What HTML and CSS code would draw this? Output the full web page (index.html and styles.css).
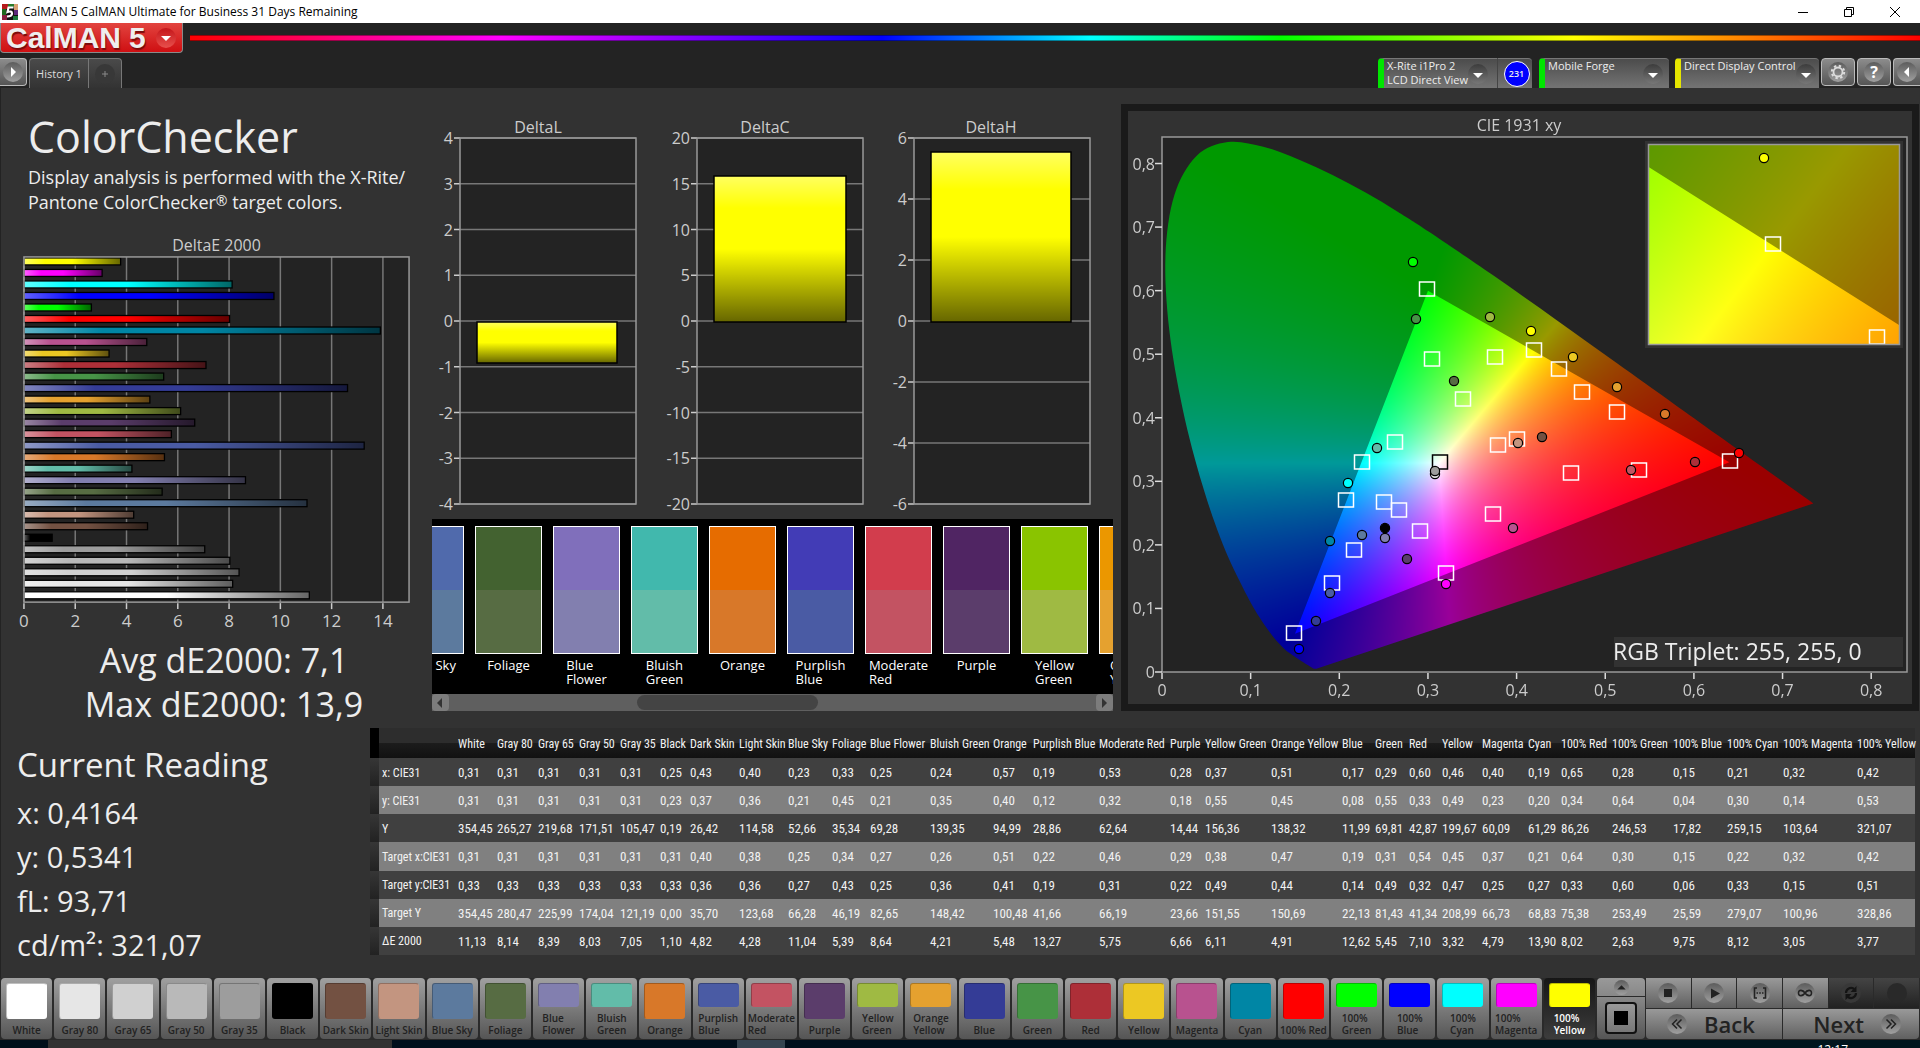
FILE: index.html
```html
<!DOCTYPE html>
<html lang="en">
<head>
<meta charset="utf-8">
<title>CalMAN 5 CalMAN Ultimate for Business 31 Days Remaining</title>
<link rel="stylesheet" href="styles.css">
</head>
<body>
<header class="titlebar">
  <svg class="app-icon" viewBox="0 0 16 16" aria-hidden="true">
    <rect width="16" height="16" fill="#111"/>
    <path d="M0 0h6v5H0z" fill="#b51a1a"/><path d="M6 0h6v3H6z" fill="#2a7a2a"/><path d="M12 0h4v6h-4z" fill="#d8a070"/>
    <path d="M0 5h4v6H0z" fill="#1e6a1e"/><path d="M0 11h5v5H0z" fill="#8a2040"/><path d="M12 6h4v5h-4z" fill="#5b2a7a"/><path d="M11 12h5v4h-5z" fill="#1c7a3c"/>
    <path d="M11.500 3.500H6.500L5.500 8Q10 6.500 10 9.500T5 12.500" fill="none" stroke="#fff" stroke-width="2.200"/>
  </svg>
  <span class="titlebar-text">CalMAN 5 CalMAN Ultimate for Business 31 Days Remaining</span>
  <div class="window-buttons">
    <button aria-label="Minimize"><svg viewBox="0 0 12 12"><path d="M1 6.500h10"/></svg></button>
    <button aria-label="Restore"><svg viewBox="0 0 12 12"><path d="M1.500 3.500h7v7h-7zM3.500 3.500v-2h7v7h-2"/></svg></button>
    <button aria-label="Close"><svg viewBox="0 0 12 12"><path d="M1 1l10 10M11 1L1 11"/></svg></button>
  </div>
</header>

<div class="brandbar">
  <button class="logo"><span class="logo-name">CalMAN</span><span class="logo-name">5</span>
    <span class="logo-menu"><svg viewBox="0 0 20 20"><path d="M5 8h10l-5 5z" fill="#fff"/></svg></span>
  </button>
  <div class="spectrum"></div>
</div>

<nav class="toolbar">
  <button class="square-btn expand" aria-label="Expand"><svg viewBox="0 0 20 20"><circle cx="10" cy="10" r="10" fill="url(#knob)"/><path d="M8 5l5 5-5 5z" fill="#fff"/></svg></button>
  <div class="tabs">
    <button class="tab">History 1</button>
    <button class="tab-add" aria-label="Add tab"><svg viewBox="0 0 20 20"><circle cx="10" cy="10" r="10" fill="#383838"/><path d="M7 10h6M10 7v6" stroke="#888"/></svg></button>
  </div>
  <div class="devices">
    <button class="device meter"><span>X-Rite i1Pro 2<br>LCD Direct View</span><svg viewBox="0 0 20 20"><circle cx="10" cy="10" r="10" fill="url(#well)"/><path d="M5 9h10l-5 5z" fill="#fff"/></svg></button>
    <div class="meter-count"><span>231</span></div>
    <button class="device source"><span>Mobile Forge</span><svg viewBox="0 0 20 20"><circle cx="10" cy="10" r="10" fill="url(#well)"/><path d="M5 9h10l-5 5z" fill="#fff"/></svg></button>
    <button class="device display"><span>Direct Display Control</span><svg viewBox="0 0 20 20"><circle cx="10" cy="10" r="10" fill="url(#well)"/><path d="M5 9h10l-5 5z" fill="#fff"/></svg></button>
    <button class="square-btn" aria-label="Settings"><svg viewBox="0 0 20 20"><circle cx="10" cy="10" r="10" fill="url(#knob)"/><circle cx="10" cy="10" r="4.500" fill="none" stroke="#ddd" stroke-width="1.800"/><circle cx="10" cy="10" r="6.200" fill="none" stroke="#ddd" stroke-width="2" stroke-dasharray="2.400 2.470"/></svg></button>
    <button class="square-btn help" aria-label="Help"><span>?</span></button>
    <button class="square-btn last" aria-label="Collapse"><svg viewBox="0 0 20 20"><circle cx="10" cy="10" r="10" fill="url(#knob)"/><path d="M12 5l-5 5 5 5z" fill="#fff"/></svg></button>
  </div>
</nav>

<main class="workspace">
  <section class="upper">
    <div class="summary">
      <h1>ColorChecker</h1>
      <p class="intro">Display analysis is performed with the X-Rite/<br>Pantone ColorChecker<sup>®</sup> target colors.</p>
      <svg id="delta-e" class="chart" viewBox="0 230 432 409"></svg>
      <p class="stat">Avg dE2000: 7,1</p>
      <p class="stat">Max dE2000: 13,9</p>
    </div>

    <div class="middle">
      <svg id="deltas" class="chart" viewBox="432 110 681 409"></svg>
      <div class="swatch-view">
        <div class="swatch-strip" id="swatches"></div>
        <div class="scrollbar">
          <button aria-label="Scroll left"><svg viewBox="0 0 16 16"><path d="M10 3v10L5 8z"/></svg></button>
          <div class="track"><div class="thumb"></div></div>
          <button aria-label="Scroll right"><svg viewBox="0 0 16 16"><path d="M6 3v10l5-5z"/></svg></button>
        </div>
      </div>
    </div>

    <div class="cie-col">
      <div class="cie">
        <canvas id="cie-colors" width="784" height="593"></canvas>
        <svg id="cie-chart" class="chart" viewBox="1128 111 784 593"></svg>
      </div>
    </div>
  </section>

  <section class="lower">
    <div class="reading">
      <h2>Current Reading</h2>
      <p>x: 0,4164</p>
      <p>y: 0,5341</p>
      <p>fL: 93,71</p>
      <p>cd/m²: 321,07</p>
    </div>
    <table class="data" id="data"></table>
  </section>
</main>

<footer class="controls">
  <div class="patches" id="patches"></div>
  <div class="layout-box">
    <button class="up" aria-label="Show more"><svg viewBox="0 0 16 16"><circle cx="8" cy="8" r="8" fill="url(#knob)"/><path d="M3.500 10h9L8 5.500z" fill="#222"/></svg></button>
    <button class="pattern" aria-label="Pattern"><span></span></button>
  </div>
  <div class="transport">
    <button aria-label="Stop"><svg viewBox="0 0 20 20"><circle cx="10" cy="10" r="10" fill="url(#knob)"/><path d="M6 6h8v8H6z" fill="#222"/></svg></button>
    <button aria-label="Play"><svg viewBox="0 0 20 20"><circle cx="10" cy="10" r="10" fill="url(#knob)"/><path d="M7 5.500l9 5-9 5z" fill="#222"/></svg></button>
    <button aria-label="Read series"><svg viewBox="0 0 20 20"><circle cx="10" cy="10" r="10" fill="url(#knob)"/><path d="M7 5H4.500v10H7M13 5h2.500v10H13M6.500 10h1.500M9.200 10h1.600M12 10h1.500" fill="none" stroke="#222" stroke-width="1.600"/></svg></button>
    <button aria-label="Continuous"><svg viewBox="0 0 20 20"><circle cx="10" cy="10" r="10" fill="url(#knob)"/><path d="M10 10C8 7 3.500 6 3.500 10S8 13 10 10s6.500-4 6.500 0-4.500 3-6.500 0z" fill="none" stroke="#222" stroke-width="1.600"/></svg></button>
    <button class="off" aria-label="Refresh"><svg viewBox="0 0 20 20"><circle cx="10" cy="10" r="10" fill="#383838"/><path d="M5 10a5 5 0 0 1 8-4M15 10a5 5 0 0 1-8 4" fill="none" stroke="#141414" stroke-width="2.200"/><path d="M15.500 3v6h-6zM4.500 17v-6h6z" fill="#141414"/></svg></button>
    <button class="off" aria-label="Record"><svg viewBox="0 0 20 20"><circle cx="10" cy="10" r="10" fill="#292929"/></svg></button>
    <button class="wide"><svg viewBox="0 0 20 20"><circle cx="10" cy="10" r="10" fill="url(#knob)"/><path d="M10 5.500L5.500 10l4.500 4.500M14.500 5.500L10 10l4.500 4.500" fill="none" stroke="#222" stroke-width="1.500"/></svg>Back</button>
    <button class="wide next">Next<svg viewBox="0 0 20 20"><circle cx="10" cy="10" r="10" fill="url(#knob)"/><path d="M5.500 5.500L10 10l-4.500 4.500M10 5.500l4.500 4.500-4.500 4.500" fill="none" stroke="#222" stroke-width="1.500"/></svg></button>
  </div>
</footer>
<div class="taskbar"><span>12:17</span></div>

<svg class="defs" width="0" height="0" aria-hidden="true">
  <defs>
    <linearGradient id="knob" x1="0" y1="0" x2="0" y2="1"><stop offset="0" stop-color="#5c5c5c"/><stop offset="1" stop-color="#a0a0a0"/></linearGradient>
    <linearGradient id="well" x1="0" y1="0" x2="0" y2="1"><stop offset="0" stop-color="#3c3c3c"/><stop offset="1" stop-color="#777"/></linearGradient>
    <linearGradient id="shade-x" x1="0" y1="0" x2="1" y2="0"><stop offset="0" stop-color="#fff" stop-opacity=".38"/><stop offset=".22" stop-color="#fff" stop-opacity="0"/><stop offset=".5" stop-color="#000" stop-opacity="0"/><stop offset="1" stop-color="#000" stop-opacity=".6"/></linearGradient>
    <linearGradient id="shade-y" x1="0" y1="0" x2="0" y2="1"><stop offset="0" stop-color="#fff" stop-opacity=".38"/><stop offset=".22" stop-color="#fff" stop-opacity="0"/><stop offset=".5" stop-color="#000" stop-opacity="0"/><stop offset="1" stop-color="#000" stop-opacity=".6"/></linearGradient>
  </defs>
</svg>
<script src="app.js"></script>
</body>
</html>
```
FILE: styles.css
```css
* { box-sizing: border-box; }
body {
  margin: 0;
  min-height: 100vh;
  display: flex;
  flex-direction: column;
  overflow: hidden;
  background: #232323;
  color: #ededed;
  font-family: "Open Sans", "Noto Sans", sans-serif;
  font-size: 12px;
}
h1, h2, p { margin: 0; font-weight: 400; }
button { border: 0; padding: 0; margin: 0; background: none; color: inherit; font: inherit; }
svg { display: block; }
.defs { position: absolute; }

/* window title */
.titlebar { display: flex; align-items: center; height: 23px; padding: 0 2px; background: #fff; color: #000; }
.app-icon { width: 16px; height: 16px; }
.titlebar-text { flex: 1; padding-left: 5px; line-height: 23px; }
.window-buttons { display: flex; }
.window-buttons button { width: 46px; height: 20px; display: grid; place-items: center; }
.window-buttons svg { width: 12px; height: 12px; fill: none; stroke: #000; }

/* logo and spectrum line */
.brandbar { display: flex; height: 30px; }
.logo {
  display: flex; align-items: center; width: 183px; height: 30px; padding: 0 6px 0 5px; gap: 8px;
  background: linear-gradient(#e2443f, #cf0f12); border: 1px solid #8a8a8a; border-top: 0; border-radius: 0 0 4px 4px;
}
.logo-name { font: bold 30px/24px "Liberation Sans", sans-serif; color: #eee; text-shadow: 1px 2px 1px #7a0c0c; }
.logo-menu { margin-left: auto; width: 20px; height: 20px; border-radius: 50%; background: linear-gradient(#c4161a, #e8504c); }
.spectrum {
  flex: 1; height: 6px; margin: 12px 0 0 7px; border-top: 1px solid rgba(0,0,0,.4); border-bottom: 1px solid rgba(0,0,0,.4);
  background: linear-gradient(90deg, #f00, #f0f 18%, #00f 40%, #0ff 52%, #0f0 63%, #ff0 80%, #f00);
}

/* tabs and device boxes */
.toolbar { display: flex; align-items: flex-end; height: 35px; }
.toolbar button svg { width: 20px; height: 20px; }
.square-btn {
  width: 34px; height: 28px; margin: 0 0 2px 2px; display: grid; place-items: center;
  border: 1px solid #bbb; border-radius: 4px; background: linear-gradient(#8c8c8c, #555);
}
.expand { width: 27px; margin-left: 0; border-left: 0; border-radius: 0 4px 4px 0; }
.square-btn.last { width: 27px; border-right: 0; border-radius: 4px 0 0 4px; }
.help span { width: 20px; height: 20px; border-radius: 50%; background: linear-gradient(#5c5c5c, #a0a0a0); color: #fff; font: bold 16px/20px "Open Sans", sans-serif; }
.tabs { display: flex; height: 30px; margin-left: 2px; border: 1px solid #777; border-bottom: 0; border-radius: 4px 4px 0 0; background: linear-gradient(#4a4a4a, #333); }
.tab { width: 58px; color: #ddd; font-size: 11px; }
.tab-add { width: 33px; border-left: 1px solid #777; display: grid; place-items: center; }
.devices { display: flex; align-items: flex-end; margin-left: auto; }
.device, .meter-count { height: 30px; background: linear-gradient(#4c4c4c, #747474); border-top: 1px solid #777; }
.device { display: flex; align-items: flex-start; justify-content: space-between; text-align: left; font-size: 11px; line-height: 14px; padding-left: 3px; border-left: 6px solid #00e600; border-radius: 4px 4px 0 0; white-space: nowrap; }
.device svg { margin-top: 5px; flex: none; }
.meter { width: 119px; padding-right: 10px; border-radius: 4px 0 0 0; }
.meter-count { width: 35px; padding-left: 3px; border-left: 1px solid #444; border-radius: 0 4px 0 0; display: grid; place-items: center; }
.meter-count span { width: 26px; height: 26px; border: 1px solid #fff; border-radius: 50%; background: #00f; font-size: 9px; font-weight: 600; line-height: 24px; text-align: center; }
.source { width: 130px; margin-left: 7px; padding-right: 6px; }
.display { width: 144px; margin-left: 6px; padding-right: 6px; border-left-color: #e6e600; }

/* workspace */
.workspace { flex: 1; background: #323232; border-left: 1px solid #232323; }
.upper { display: grid; grid-template-columns: 431fr 681fr 807fr; min-height: 640px; }
.chart { width: 100%; height: auto; }
.chart text { font-family: "Open Sans", "Noto Sans", sans-serif; fill: #ccc; }
.summary { padding-top: 24px; }
.summary h1 { padding-left: 27px; font-size: 43px; line-height: 50px; }
.intro { padding: 3px 0 15px 27px; font-size: 18px; line-height: 25px; white-space: nowrap; }
.intro sup { font-size: 14px; line-height: 0; vertical-align: 3px; }
.stat { padding-left: 15px; font-size: 34px; line-height: 44px; text-align: center; white-space: nowrap; }
.middle { padding-top: 22px; min-width: 0; }
.swatch-view { background: #000; overflow: hidden; }
.swatch-strip { display: flex; gap: 11px; height: 175px; padding-top: 7px; margin-left: -35px; }
.swatch { flex: none; width: 67px; display: flex; flex-direction: column; align-items: center; font-size: 13px; line-height: 14px; color: #fff; }
.swatch-color { width: 67px; height: 128px; border: 1px solid #fff; margin-bottom: 4px; }
.scrollbar { display: flex; height: 17px; background: #5f5f5f; }
.scrollbar button { width: 17px; border-radius: 4px; background: #7c7c7c; }
.scrollbar button svg { width: 16px; height: 16px; fill: #333; }
.track { flex: 1; display: flex; padding: 1px 0; }
.thumb { width: 28%; margin-left: 29%; border-radius: 8px; background: #444; }
.cie-col { padding: 16px 1px 0 8px; }
.cie { display: grid; border: 7px solid #1a1a1a; background: #323232; }
.cie canvas, .cie svg { grid-area: 1 / 1; width: 100%; height: auto; display: block; }
.chart .rgb { font-size: 23px; fill: #ededed; }

/* lower part */
.lower { display: flex; padding-right: 5px; }
.reading { width: 369px; flex: none; padding: 14px 0 0 16px; font-size: 29px; line-height: 44px; }
.reading h2 { font-size: 33px; line-height: 46px; padding-bottom: 3px; }
.data { flex: 1; width: 0; height: 227px; table-layout: fixed; border-collapse: collapse; font: 13px "Roboto Condensed", "Liberation Sans", sans-serif; color: #f2f2f2; }
.data td, .data th { padding: 1px 0 0 3px; height: 28px; text-align: left; font-weight: 400; white-space: nowrap; }
.data th { font-size: 12px; }
.data thead th { height: 30px; background: linear-gradient(#2d2d2d 50%, #1c1c1c 50%, #111); }
.data tbody tr { background: #404040; }
.data tbody tr:nth-child(even) { background: #808080; }
.data thead .grip { background: #000; }
.data .grip { background: linear-gradient(#363636, #222); }

/* bottom controls */
.controls { display: flex; height: 62px; padding: 0 1px 1px; gap: 2px; background: #2a2a2a; }
.patches { flex: 1; display: grid; grid-template-columns: repeat(30, 1fr); gap: 2px; }
.patch {
  min-width: 0; display: flex; flex-direction: column; align-items: center; padding-top: 5px; border-radius: 4px;
  background: linear-gradient(#a0a0a0, #555); color: #222; font-size: 10px; font-weight: 600; line-height: 12px; white-space: nowrap;
}
.patch i { width: 41px; flex: 1; border-radius: 3px; border: 1px solid rgba(0,0,0,.25); border-right-color: transparent; border-bottom-color: transparent; background-clip: border-box; }
.patch span { padding: 5px 0 3px; text-align: left; }
.patch.active { background: linear-gradient(#161616, #3c3c3c); color: #fff; }
.layout-box { width: 48px; display: flex; flex-direction: column; gap: 1px; }
.layout-box button { display: grid; place-items: center; background: linear-gradient(#999, #888); }
.up { height: 18px; border-radius: 4px 4px 0 0; }
.up svg { width: 15px; height: 15px; }
.layout-box .pattern { flex: 1; border-radius: 0 0 4px 4px; background: linear-gradient(#888, #555); }
.pattern span { width: 32px; height: 32px; border: 2px solid #111; border-radius: 4px; background: linear-gradient(#000, #000) center / 14px 14px no-repeat, linear-gradient(#999, #777); }
.transport { width: 273px; display: grid; grid-template-columns: repeat(6, 1fr); grid-template-rows: 1fr 1fr; gap: 1px; margin-left: -1px; }
.transport button { display: grid; place-items: center; background: linear-gradient(#999, #606060); }
.transport svg { width: 20px; height: 20px; }
.transport .off { background: linear-gradient(#444, #222); }
.transport .wide { grid-column: span 3; display: flex; align-items: center; gap: 17px; padding-left: 21px; color: #222; font-size: 22px; font-weight: 600; line-height: 30px; border-radius: 0 0 0 4px; }
.transport .next { justify-content: flex-end; padding: 0 18px 0 0; border-radius: 0 0 4px 0; }

.taskbar { height: 8px; overflow: hidden; background: linear-gradient(90deg, #000f1a 48px, #323232 48px 392px, #000f1c 392px 737px, #344450 737px 785px, #000f1c 785px 1130px, #00161e 1130px); }
.taskbar span { display: block; text-align: right; padding: 2px 72px 0 0; font-size: 12px; line-height: 16px; color: #fff; }
```
FILE: app.js
```js
// name, measured x, y, Y, target x, y, Y, delta E, column width, patch colour
const patches = [
  ["White", "0,31", "0,31", "354,45", "0,31", "0,33", "354,45", "11,13", 39, "#ffffff"],
  ["Gray 80", "0,31", "0,31", "265,27", "0,31", "0,33", "280,47", "8,14", 41, "#e6e6e6"],
  ["Gray 65", "0,31", "0,31", "219,68", "0,31", "0,33", "225,99", "8,39", 41, "#d0d0d0"],
  ["Gray 50", "0,31", "0,31", "171,51", "0,31", "0,33", "174,04", "8,03", 41, "#b9b9b9"],
  ["Gray 35", "0,31", "0,31", "105,47", "0,31", "0,33", "121,19", "7,05", 40, "#9d9d9d"],
  ["Black", "0,25", "0,23", "0,19", "0,31", "0,33", "0,00", "1,10", 30, "#000000"],
  ["Dark Skin", "0,43", "0,37", "26,42", "0,40", "0,36", "35,70", "4,82", 49, "#735142"],
  ["Light Skin", "0,40", "0,36", "114,58", "0,38", "0,36", "123,68", "4,28", 49, "#c39580"],
  ["Blue Sky", "0,23", "0,21", "52,66", "0,25", "0,27", "66,28", "11,04", 44, "#5c7a9e"],
  ["Foliage", "0,33", "0,45", "35,34", "0,34", "0,43", "46,19", "5,39", 38, "#576c43"],
  ["Blue Flower", "0,25", "0,21", "69,28", "0,27", "0,25", "82,65", "8,64", 60, "#827faf"],
  ["Bluish Green", "0,24", "0,35", "139,35", "0,26", "0,36", "148,42", "4,21", 63, "#62bca9"],
  ["Orange", "0,57", "0,40", "94,99", "0,51", "0,41", "100,48", "5,48", 40, "#d87829"],
  ["Purplish Blue", "0,19", "0,12", "28,86", "0,22", "0,19", "41,66", "13,27", 66, "#4a5ba4"],
  ["Moderate Red", "0,53", "0,32", "62,64", "0,46", "0,31", "66,19", "5,75", 71, "#c35362"],
  ["Purple", "0,28", "0,18", "14,44", "0,29", "0,22", "23,66", "6,66", 35, "#5b3d6b"],
  ["Yellow Green", "0,37", "0,55", "156,36", "0,38", "0,49", "151,55", "6,11", 66, "#9fba43"],
  ["Orange Yellow", "0,51", "0,45", "138,32", "0,47", "0,44", "150,69", "4,91", 71, "#e5a12f"],
  ["Blue", "0,17", "0,08", "11,99", "0,19", "0,14", "22,13", "12,62", 33, "#343c96"],
  ["Green", "0,29", "0,55", "69,81", "0,31", "0,49", "81,43", "5,45", 34, "#479447"],
  ["Red", "0,60", "0,33", "42,87", "0,54", "0,32", "41,34", "7,10", 33, "#ad2f38"],
  ["Yellow", "0,46", "0,49", "199,67", "0,45", "0,47", "208,99", "3,32", 40, "#ecc823"],
  ["Magenta", "0,40", "0,23", "60,09", "0,37", "0,25", "66,73", "4,79", 46, "#b8528f"],
  ["Cyan", "0,19", "0,20", "61,29", "0,21", "0,27", "68,83", "13,90", 33, "#0086a5"],
  ["100% Red", "0,65", "0,34", "86,26", "0,64", "0,33", "75,38", "8,02", 51, "#ff0000"],
  ["100% Green", "0,28", "0,64", "246,53", "0,30", "0,60", "253,49", "2,63", 61, "#00ff00"],
  ["100% Blue", "0,15", "0,04", "17,82", "0,15", "0,06", "25,59", "9,75", 54, "#0000ff"],
  ["100% Cyan", "0,21", "0,30", "259,15", "0,22", "0,33", "279,07", "8,12", 56, "#00ffff"],
  ["100% Magenta", "0,32", "0,14", "103,64", "0,32", "0,15", "100,96", "3,05", 74, "#ff00ff"],
  ["100% Yellow", "0,42", "0,53", "321,07", "0,42", "0,51", "328,86", "3,77", 61, "#ffff00"]
];
const byId = id => document.getElementById(id);
const num = s => parseFloat(s.replace(",", "."));

// data table
const rowNames = ["x: CIE31", "y: CIE31", "Y", "Target x:CIE31", "Target y:CIE31", "Target Y", "ΔE 2000"];
byId("data").innerHTML =
  `<colgroup>${[9, 76, ...patches.map(p => p[8])].map(w => `<col style="width:${w}px">`).join("")}</colgroup>` +
  `<thead><tr><th class="grip"></th><th></th>${patches.map(p => `<th>${p[0]}</th>`).join("")}</tr></thead>` +
  `<tbody>${rowNames.map((n, i) => `<tr><td class="grip"></td><th>${n}</th>${patches.map(p => `<td>${p[i + 1]}</td>`).join("")}</tr>`).join("")}</tbody>`;

const wraps = /^(Blue Flower|Bluish|Purplish|Moderate|Yellow Green|Orange Yellow|100% (?!Red))/;
byId("patches").innerHTML = patches.map((p, i) =>
  `<button class="patch${i === 29 ? " active" : ""}"><i style="background:${p[9]}"></i><span>${wraps.test(p[0]) ? p[0].replace(" ", "<br>") : p[0]}</span></button>`).join("");

// measured over target swatches
const measured = ["#506aac", "#436230", "#806fbb", "#41b8ad", "#e66c00", "#423cb6", "#d23d4d", "#502563", "#8ac400", "#eb9700"];
const strip = [8, 9, 10, 11, 12, 13, 14, 15, 16, 17];
byId("swatches").innerHTML = strip.map((k, i) => {
  const p = patches[k];
  return `<div class="swatch"><div class="swatch-color" style="background:linear-gradient(${measured[i]} 50%,${p[9]} 50%)"></div><span>${wraps.test(p[0]) ? p[0].replace(" ", "<br>") : p[0]}</span></div>`;
}).join("");

const line = (x1, y1, x2, y2, c, w) => `<path d="M${x1} ${y1}L${x2} ${y2}" stroke="${c}" stroke-width="${w}"/>`;
const label = (x, y, t, anchor, size) => `<text x="${x}" y="${y}" text-anchor="${anchor}" font-size="${size}">${t}</text>`;

// Delta E bars
{
  const x0 = 23;
  let s = label(216, 251, "DeltaE 2000", "middle", 16) + `<rect x="${x0}" y="257" width="386" height="346" fill="#232323"/>`;
  for (let v = 0; v <= 14; v += 2) {
    const x = x0 + v * 25.7;
    s += line(x, 257, x, 603, "#777", 1.5) + line(x, 604, x, 610, "#ccc", 1.5) + label(x, 628, v, "middle", 17);
  }
  [...patches].reverse().forEach((p, i) => {
    const w = num(p[7]) * 25.7, y = 258 + i * 11.54;
    s += `<rect x="${x0}" y="${y}" width="${w}" height="7" fill="${p[9]}"/><rect x="${x0}" y="${y}" width="${w}" height="7" fill="url(#shade-x)" stroke="#000" stroke-width="1.3"/>`;
  });
  s += `<rect x="${x0}" y="257" width="386" height="346" fill="none" stroke="#999" stroke-width="1.5"/>`;
  byId("delta-e").innerHTML = s;
}

// DeltaL, DeltaC, DeltaH
{
  const charts = [
    ["DeltaL", 538, 460, 636, 4, 1, [477, 322, 140, 41]],
    ["DeltaC", 765, 697, 863, 20, 5, [714, 176, 132, 146]],
    ["DeltaH", 991, 914, 1090, 6, 2, [931, 152, 140, 170]]
  ];
  byId("deltas").innerHTML = charts.map(([name, cx, x0, x1, max, step, b]) => {
    let s = label(cx, 133, name, "middle", 16) + `<rect x="${x0}" y="138" width="${x1 - x0}" height="366" fill="#232323"/>`;
    for (let v = max; v >= -max; v -= step) {
      const y = 321 - v * 183 / max;
      s += line(x0, y, x1, y, "#777", 1.5) + line(x0 - 6, y, x0, y, "#ccc", 1.5) + label(x0 - 7, y + 6, v, "end", 16);
    }
    const box = `x="${b[0]}" y="${b[1]}" width="${b[2]}" height="${b[3]}"`;
    return s + `<rect x="${x0}" y="138" width="${x1 - x0}" height="366" fill="none" stroke="#999" stroke-width="1.5"/><rect ${box} fill="#ff0"/><rect ${box} fill="url(#shade-y)" stroke="#000" stroke-width="1.5"/>`;
  }).join("");
}

// CIE 1931 diagram. Both layers share the same coordinates.
const OX = 1162, OY = 672, SX = 886.5, SY = 635.6;
const IX = 1772.5, IY = 245, ISX = 3750, ISY = 2981;
{
  let s = label(1519, 131, "CIE 1931 xy", "middle", 16) + `<rect x="1162" y="137" width="745" height="535" fill="none" stroke="#999" stroke-width="1.5"/>`;
  for (let i = 0; i <= 8; i++) {
    const t = i ? "0," + i : "0", x = OX + i * SX / 10, y = OY - i * SY / 10;
    s += line(x, 673, x, 679, "#ddd", 1.5) + label(x, 696, t, "middle", 16) + line(1155, y, 1162, y, "#ddd", 1.5) + label(1155, y + 6, t, "end", 16);
  }
  const square = (x, y, c = "#fff") => `<rect x="${x - 7.5}" y="${y - 7}" width="15" height="14" fill="none" stroke="${c}" stroke-width="1.5"/>`;
  const dot = (x, y, c) => `<circle cx="${x}" cy="${y}" r="4.600" fill="${c}" stroke="#000" stroke-width="1.2"/>`;
  const targets = [[1427, 289], [1432, 359], [1495, 357], [1463, 399], [1395, 442], [1362, 462], [1498, 445], [1517, 439], [1346, 500], [1384, 502], [1399, 510], [1420, 531], [1493, 514], [1354, 550], [1332, 583], [1446, 573], [1294, 633], [1534, 350], [1559, 369], [1582, 392], [1617, 412], [1571, 473], [1639, 470], [1730, 461]];
  s += targets.map(t => square(...t)).join("") + square(1440, 462, "#000");
  const dots = [[1413, 262, "#0f0"], [1416, 319, "#479447"], [1490, 317, "#9fba43"], [1531, 331, "#ff0"], [1454, 381, "#576c43"], [1377, 448, "#62bca9"], [1348, 483, "#0ff"], [1435, 474, "#e6e6e6"], [1435, 471, "#9d9d9d"], [1385, 528, "#000"], [1385, 538, "#827faf"], [1362, 535, "#5c7a9e"], [1330, 541, "#0086a5"], [1407, 559, "#5b3d6b"], [1513, 528, "#b8528f"], [1446, 584, "#f0f"], [1330, 593, "#4a5ba4"], [1316, 621, "#343c96"], [1299, 649, "#00f"], [1518, 443, "#c39580"], [1542, 437, "#735142"], [1573, 357, "#ecc823"], [1617, 387, "#e5a12f"], [1665, 414, "#d87829"], [1631, 470, "#c35362"], [1695, 462, "#ad2f38"], [1739, 453, "#f00"]];
  s += dots.map(d => dot(...d)).join("");
  s += `<clipPath id="inset"><rect x="1649" y="145" width="250" height="199"/></clipPath><g clip-path="url(#inset)">${square(1773, 244)}${square(1877, 337)}${dot(1764, 158, "#ff0")}</g>`;
  s += `<rect x="1648.500" y="144.500" width="251" height="200" fill="none" stroke="#999" stroke-width="1.5"/>`;
  s += `<rect x="1614" y="637" width="289" height="30" fill="#323232"/><text class="rgb" x="1613" y="660">RGB Triplet: 255, 255, 0</text>`;
  byId("cie-chart").innerHTML = s;
}
{
  const ctx = byId("cie-colors").getContext("2d");
  const L = 1128, T = 111, W = 784, H = 593;
  // chromaticity to fully saturated linear RGB
  const field = (w, h, toXY) => {
    const c = document.createElement("canvas");
    c.width = w; c.height = h;
    const g = c.getContext("2d"), img = g.createImageData(w, h);
    for (let j = 0, k = 0; j < h; j++) for (let i = 0; i < w; i++, k += 4) {
      let [x, y] = toXY(i + .5, j + .5);
      y = Math.max(y, .001);
      const X = x / y, Z = (1 - x - y) / y;
      const r = Math.max(0, 3.2406 * X - 1.5372 - .4986 * Z);
      const gr = Math.max(0, -.9689 * X + 1.8758 + .0415 * Z);
      const b = Math.max(0, .0557 * X - .2040 + 1.0570 * Z);
      const m = 255 / Math.max(r, gr, b, .0001);
      img.data[k] = r * m; img.data[k + 1] = gr * m; img.data[k + 2] = b * m; img.data[k + 3] = 255;
    }
    g.putImageData(img, 0, 0);
    return [c, g];
  };
  // darken what lies outside the Rec.709 triangle
  const dim = (g, w, h, toPx) => {
    g.globalCompositeOperation = "source-atop";
    g.fillStyle = "rgba(0,0,0,.4)";
    g.beginPath();
    g.rect(0, 0, w, h);
    [[.64, .33], [.3, .6], [.15, .06]].forEach((p, i) => g[i ? "lineTo" : "moveTo"](...toPx(...p)));
    g.closePath();
    g.fill("evenodd");
  };
  ctx.fillStyle = "#232323";
  ctx.fillRect(1162 - L, 137 - T, 745, 535);

  const px = (x, y) => [OX - L + x * SX, OY - T - y * SY];
  const [c, g] = field(W, H, (i, j) => [(i + L - OX) / SX, (OY - j - T) / SY]);
  dim(g, W, H, px);
  const locus = [[.1741, .005], [.1714, .0051], [.1689, .0069], [.1644, .0109], [.1566, .0177], [.144, .0297], [.1355, .0399], [.1241, .0578], [.1096, .0868], [.0913, .1327], [.0687, .2007], [.0454, .295], [.0235, .4127], [.0082, .5384], [.0039, .6548], [.0139, .7502], [.0389, .812], [.0743, .8338], [.1142, .8262], [.1547, .8059], [.1929, .7816], [.2296, .7543], [.2658, .7243], [.3016, .6923], [.3731, .6245], [.4441, .5547], [.5125, .4866], [.5752, .4242], [.627, .3725], [.6915, .3083], [.7347, .2653]].map(p => px(...p));
  g.globalCompositeOperation = "destination-in";
  g.beginPath();
  g.moveTo(...locus[0]);
  for (let i = 0; i < locus.length - 1; i++) {
    const a = locus[Math.max(i - 1, 0)], b = locus[i], d = locus[i + 1], e = locus[Math.min(i + 2, locus.length - 1)];
    g.bezierCurveTo(b[0] + (d[0] - a[0]) / 6, b[1] + (d[1] - a[1]) / 6, d[0] - (e[0] - b[0]) / 6, d[1] - (e[1] - b[1]) / 6, d[0], d[1]);
  }
  g.closePath();
  g.fillStyle = "#000";
  g.fill();
  ctx.drawImage(c, 0, 0);

  // magnified view around the current target
  ctx.fillStyle = "#323232";
  ctx.fillRect(1645 - L, 141 - T, 258, 207);
  const [c2, g2] = field(250, 199, (i, j) => [.4193 + (i + 1649 - IX) / ISX, .5053 - (j + 145 - IY) / ISY]);
  dim(g2, 250, 199, (x, y) => [IX - 1649 + (x - .4193) * ISX, IY - 145 - (y - .5053) * ISY]);
  ctx.drawImage(c2, 1649 - L, 145 - T);
}
```
